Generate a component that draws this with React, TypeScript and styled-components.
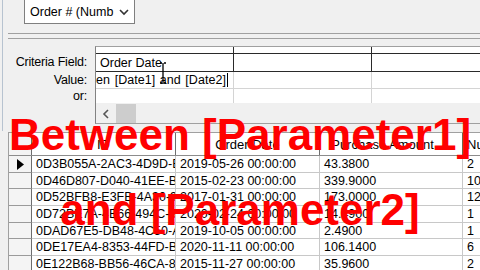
import React from 'react';
import styled, { createGlobalStyle } from 'styled-components';

const Global = createGlobalStyle`
  html, body { margin: 0; padding: 0; background: #f0f0f0; }
  body {
    width: 480px; height: 270px; overflow: hidden;
    font-family: "Liberation Sans", Arial, sans-serif;
    color: #000;
  }
`;

const Screen = styled.div`
  position: relative;
  width: 480px;
  height: 270px;
  overflow: hidden;
  background: #f0f0f0;
  display: flex;
  flex-direction: column;
`;

const EdgeLine = styled.div`
  position: absolute;
  left: 2px;
  top: 0;
  width: 1px;
  height: 131px;
  background: #b7c3d0;
`;

const TopArea = styled.div`
  height: 33px;
  flex: none;
  display: flex;
  align-items: flex-start;
  padding-left: 24px;
`;

const Combo = styled.div`
  margin-top: -2px;
  width: 111px;
  height: 26px;
  border: 1px solid #7f7f7f;
  background: #fff;
  display: flex;
  align-items: center;
  justify-content: space-between;
  padding: 2px 5px 0 5px;
  box-sizing: border-box;
  font-size: 12.5px;
`;

const DoubleRule = styled.div`
  flex: none;
  margin-left: 8px;
  height: 4px;
  border-top: 1px solid #a0a0a0;
  border-bottom: 1px solid #a0a0a0;
`;

const CriteriaSection = styled.div`
  flex: none;
  margin-top: 7px;
  display: flex;
`;

const LabelCol = styled.div`
  flex: none;
  width: 95px;
  padding-top: 7px;
  display: flex;
  flex-direction: column;
`;

const Label = styled.div<{ $h: number }>`
  height: ${(p) => p.$h}px;
  padding-right: 8px;
  display: flex;
  align-items: center;
  justify-content: flex-end;
  white-space: nowrap;
  font-size: 12.5px;
  letter-spacing: -0.2px;
`;

const CritGrid = styled.div`
  position: relative;
  flex: 1;
  min-width: 0;
  overflow: hidden;
  border-top: 1px solid #a0a0a0;
  border-left: 1px solid #828282;
  border-bottom: 1px solid #a0a0a0;
  background: #fff;
`;

const CritRow = styled.div<{ $h: number; $line: string }>`
  height: ${(p) => p.$h}px;
  border-bottom: 1px solid ${(p) => p.$line};
  display: flex;
`;

const CritCell = styled.div<{ $div: string; $end?: boolean }>`
  width: 138px;
  flex: none;
  border-right: 1px solid ${(p) => p.$div};
  display: flex;
  align-items: center;
  justify-content: ${(p) => (p.$end ? 'flex-end' : 'flex-start')};
  overflow: hidden;
  white-space: nowrap;
  font-size: 12.5px;
  padding: ${(p) => (p.$end ? '0 5px 0 0' : '0 0 0 4px')};
  box-sizing: border-box;
`;

const ScrolledText = styled.span`
  flex: none;
  word-spacing: 1px;
  letter-spacing: 0.05px;
`;

const Caret = styled.span`
  display: inline-block;
  flex: none;
  width: 1px;
  height: 14px;
  background: #000;
  margin-left: 1px;
`;

const HScroll = styled.div`
  height: 19px;
  background: #f0f0f0;
  display: flex;
  align-items: center;
`;

const ScrollArrow = styled.div`
  width: 20px;
  height: 19px;
  display: flex;
  align-items: center;
  justify-content: center;
`;

const ScrollThumb = styled.div`
  width: 20px;
  height: 19px;
  background: #cdcdcd;
`;

const IBeam = styled.svg`
  position: absolute;
  left: 63px;
  top: 15px;
`;

const DataGrid = styled.div`
  flex: none;
  margin-top: 8px;
  margin-left: 8px;
  border-top: 1px solid #a0a0a0;
  border-left: 1px solid #a0a0a0;
  background: #fff;
  display: flex;
  flex-direction: column;
`;

const HeadRow = styled.div`
  height: 22px;
  border-bottom: 1px solid #8c8c8c;
  display: flex;
`;

const DataRow = styled.div<{ $h: number }>`
  height: ${(p) => p.$h}px;
  border-bottom: 1px solid #c8c8c8;
  display: flex;
`;

const Selector = styled.div<{ $head?: boolean }>`
  width: 22px;
  flex: none;
  border-right: 1px solid #6e6e6e;
  border-bottom: ${(p) => (p.$head ? 'none' : '1px solid #9a9a9a')};
  margin-bottom: ${(p) => (p.$head ? '0' : '-1px')};
  background: #f4f4f4;
  display: flex;
  align-items: center;
  justify-content: center;
`;

const HeadCell = styled.div<{ $w: number; $align: string }>`
  width: ${(p) => p.$w}px;
  flex: none;
  border-right: 1px solid #6e6e6e;
  display: flex;
  align-items: center;
  justify-content: ${(p) => p.$align};
  padding: 0 4px;
  box-sizing: border-box;
  overflow: hidden;
  white-space: nowrap;
  font-size: 13px;
  background: #fff;
`;

const Cell = styled.div<{ $w: number }>`
  width: ${(p) => p.$w}px;
  flex: none;
  border-right: 1px solid #c8c8c8;
  display: flex;
  align-items: center;
  padding-left: 4px;
  box-sizing: border-box;
  overflow: hidden;
  white-space: nowrap;
  font-size: 12.5px;
`;

const Caption = styled.div`
  position: absolute;
  left: 0;
  top: 97px;
  width: 480px;
  text-align: center;
  font-family: "Liberation Sans", Arial, sans-serif;
  font-weight: bold;
  font-size: 44px;
  line-height: 75px;
  color: #ff0000;
  white-space: nowrap;
  pointer-events: none;
`;

const cols = [144, 144, 143, 60];

const rows: { h: number; c: string[] }[] = [
  { h: 16, c: ['0D3B055A-2AC3-4D9D-B1C2-7A01', '2019-05-26 00:00:00', '43.3800', '2'] },
  { h: 15, c: ['0D46D807-D040-41EE-B5A2-11C4', '2015-02-23 00:00:00', '339.9000', '10'] },
  { h: 16, c: ['0D52BFB8-E3FB-4A30-9D17-3E2B', '2017-01-31 00:00:00', '173.0000', '12'] },
  { h: 16, c: ['0D72BE7A-4B66-494C-8E02-55AF', '2020-02-24 00:00:00', '14.4900', '1'] },
  { h: 15, c: ['0DAD67E5-DB48-4C50-A7B9-0C1D', '2019-10-05 00:00:00', '2.4900', '1'] },
  { h: 16, c: ['0DE17EA4-8353-44FD-B6E1-90AA', '2020-11-11 00:00:00', '106.1400', '6'] },
  { h: 16, c: ['0E122B68-BB56-46CA-8F03-2D7C', '2015-11-27 00:00:00', '35.9600', '2'] },
];

const Chevron = () => (
  <svg width="10" height="7" viewBox="0 0 10 7">
    <polyline points="1,1 5,5 9,1" fill="none" stroke="#333" strokeWidth="1.6" />
  </svg>
);

export default function App() {
  return (
    <Screen>
      <Global />
      <EdgeLine />
      <TopArea>
        <Combo>
          <span>Order # (Numb</span>
          <Chevron />
        </Combo>
      </TopArea>
      <DoubleRule />
      <CriteriaSection>
        <LabelCol>
          <Label $h={18}>Criteria Field:</Label>
          <Label $h={17}>Value:</Label>
          <Label $h={15}>or:</Label>
        </LabelCol>
        <CritGrid>
          <CritRow $h={6} $line="#2a2a2a">
            <CritCell $div="#2a2a2a" />
            <CritCell $div="#2a2a2a" />
            <CritCell $div="#2a2a2a" />
          </CritRow>
          <CritRow $h={17} $line="#2a2a2a">
            <CritCell $div="#2a2a2a">Order Date</CritCell>
            <CritCell $div="#2a2a2a" />
            <CritCell $div="#2a2a2a" />
          </CritRow>
          <CritRow $h={16} $line="#d4d4d4">
            <CritCell $div="#d4d4d4" $end>
              <ScrolledText>Between [Date1] and [Date2]</ScrolledText>
              <Caret />
            </CritCell>
            <CritCell $div="#d4d4d4" />
            <CritCell $div="#d4d4d4" />
          </CritRow>
          <CritRow $h={14} $line="#f0f0f0">
            <CritCell $div="#d4d4d4" />
            <CritCell $div="#d4d4d4" />
            <CritCell $div="#d4d4d4" />
          </CritRow>
          <HScroll>
            <ScrollArrow>
              <svg width="8" height="10" viewBox="0 0 8 10">
                <polyline points="6,1 2,5 6,9" fill="none" stroke="#555" strokeWidth="1.6" />
              </svg>
            </ScrollArrow>
            <ScrollThumb />
          </HScroll>
          <IBeam width="8" height="22" viewBox="0 0 8 22">
            <path d="M1 1 H3 M5 1 H7 M4 1 V21 M1 21 H3 M5 21 H7" stroke="#000" strokeWidth="1.3" fill="none" />
          </IBeam>
        </CritGrid>
      </CriteriaSection>
      <DataGrid>
        <HeadRow>
          <Selector $head />
          <HeadCell $w={cols[0]} $align="center">ID</HeadCell>
          <HeadCell $w={cols[1]} $align="center">Order Date</HeadCell>
          <HeadCell $w={cols[2]} $align="flex-start">&nbsp;&nbsp;Purchase Amount</HeadCell>
          <HeadCell $w={cols[3]} $align="flex-start">Number of Items</HeadCell>
        </HeadRow>
        {rows.map((r, i) => (
          <DataRow key={i} $h={r.h}>
            <Selector>
              {i === 0 && (
                <svg width="7" height="11" viewBox="0 0 7 11">
                  <polygon points="0,0 7,5.5 0,11" fill="#000" />
                </svg>
              )}
            </Selector>
            {r.c.map((t, j) => (
              <Cell key={j} $w={cols[j]}>{t}</Cell>
            ))}
          </DataRow>
        ))}
      </DataGrid>
      <Caption>
        Between [Parameter1]
        <br />
        and [Parameter2]
      </Caption>
    </Screen>
  );
}
